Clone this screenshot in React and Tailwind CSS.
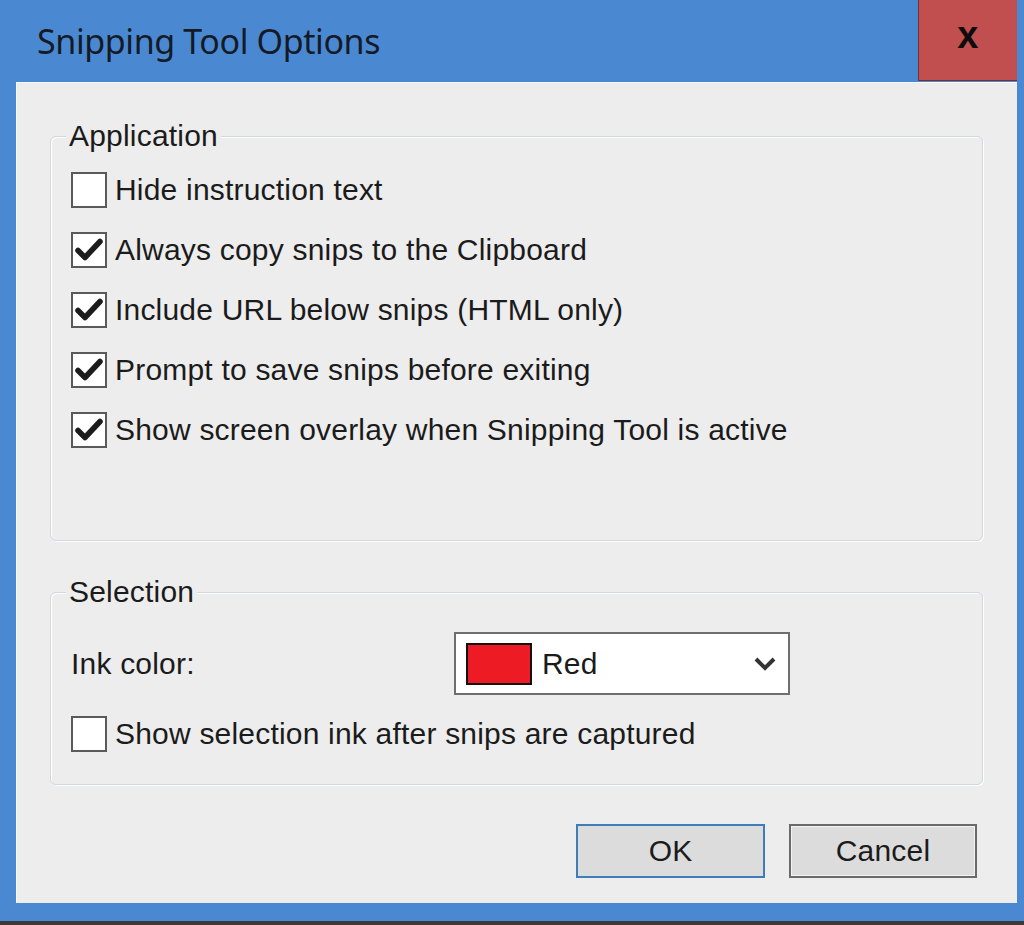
import React from 'react';

const body = { fontFamily: '"Liberation Sans", Arial, sans-serif', letterSpacing: '0.2px' };

const appOptions = [
  { label: 'Hide instruction text', checked: false },
  { label: 'Always copy snips to the Clipboard', checked: true },
  { label: 'Include URL below snips (HTML only)', checked: true },
  { label: 'Prompt to save snips before exiting', checked: true },
  { label: 'Show screen overlay when Snipping Tool is active', checked: true },
];

function Checkbox({ checked }) {
  return (
    <div className="flex h-[36px] w-[36px] shrink-0 items-center justify-center border-2 border-[#5a5a5a] bg-white">
      {checked && (
        <svg width="28" height="26" viewBox="0 0 28 26">
          <path
            d="M3 13.5 L10 20.5 L25 4.5"
            fill="none"
            stroke="#1c1c1c"
            strokeWidth="5.5"
            strokeLinecap="round"
            strokeLinejoin="round"
          />
        </svg>
      )}
    </div>
  );
}

function Option({ label, checked }) {
  return (
    <div className="flex h-[60px] items-center gap-[8px] pl-[20px]">
      <Checkbox checked={checked} />
      <span className="text-[30px] leading-none text-[#1b1b1b]">{label}</span>
    </div>
  );
}

function Group({ title, className, children }) {
  return (
    <div
      className={`relative ml-[33px] mr-[34px] rounded-[6px] border border-[#cfd8dd] shadow-[inset_1px_1px_0_#ffffff,1px_1px_0_#ffffff] ${className}`}
    >
      {/* group caption sits on the top border */}
      <span className="absolute left-[15px] top-[-17px] bg-[#ededed] px-[3px] text-[30px] leading-[32px] text-[#1b1b1b]">
        {title}
      </span>
      {children}
    </div>
  );
}

export default function App() {
  return (
    <div className="flex h-[925px] w-[1024px] flex-col bg-[#4a89d1]" style={body}>
      {/* Title bar */}
      <div className="flex h-[82px] shrink-0 items-start">
        <div
          className="flex h-[82px] items-center pl-[37px] text-[34px] text-[#141a26]"
          style={{ fontFamily: '"Noto Sans", "Open Sans", sans-serif', letterSpacing: '-0.4px' }}
        >
          Snipping Tool Options
        </div>
        <div className="ml-auto mr-[7px] flex h-[81px] w-[99px] items-center justify-center border-b border-l border-[#6e3434] bg-[#c24f4f]">
          <span className="mt-[-10px] text-[38px] font-bold leading-none text-[#0d0d0d]">x</span>
        </div>
      </div>

      {/* Dialog body */}
      <div className="ml-[16px] mr-[7px] flex h-[821px] shrink-0 flex-col border-l border-t border-[#f8f8f8] bg-[#ededed]">
        <Group title="Application" className="mt-[53px] h-[405px] pt-[23px]">
          {appOptions.map((o) => (
            <Option key={o.label} label={o.label} checked={o.checked} />
          ))}
        </Group>

        <Group title="Selection" className="mt-[51px] h-[193px] pt-[39px]">
          <div className="flex h-[63px] items-center pl-[20px]">
            <span className="w-[383px] text-[30px] leading-none text-[#1b1b1b]">Ink color:</span>
            <div className="flex h-[63px] w-[336px] items-center border-2 border-[#6f6f6f] bg-white pl-[10px] pr-[11px]">
              <div className="h-[42px] w-[66px] border-2 border-[#111] bg-[#ed1c24]" />
              <span className="ml-[10px] text-[30px] leading-none text-[#1b1b1b]">Red</span>
              <svg className="ml-auto" width="24" height="16" viewBox="0 0 24 16">
                <path
                  d="M3 3 L12 12 L21 3"
                  fill="none"
                  stroke="#333"
                  strokeWidth="4"
                  strokeLinejoin="miter"
                />
              </svg>
            </div>
          </div>
          <div className="mt-[9px]">
            <Option label="Show selection ink after snips are captured" checked={false} />
          </div>
        </Group>

        <div className="mt-[39px] flex justify-end gap-[24px] pr-[40px]">
          <button className="flex h-[54px] w-[189px] items-center justify-center border-2 border-[#3f7db8] bg-[#dcdcdc] text-[30px] leading-none text-[#1b1b1b]">
            OK
          </button>
          <button className="flex h-[54px] w-[188px] items-center justify-center border-2 border-[#6a6a6a] bg-[#dcdcdc] text-[30px] leading-none text-[#1b1b1b] shadow-[inset_0_0_0_1px_#f2f2f2]">
            Cancel
          </button>
        </div>
      </div>

      <div className="h-[18px] shrink-0" />
      <div className="h-[4px] shrink-0 bg-[#3a3a3a]" />
    </div>
  );
}
